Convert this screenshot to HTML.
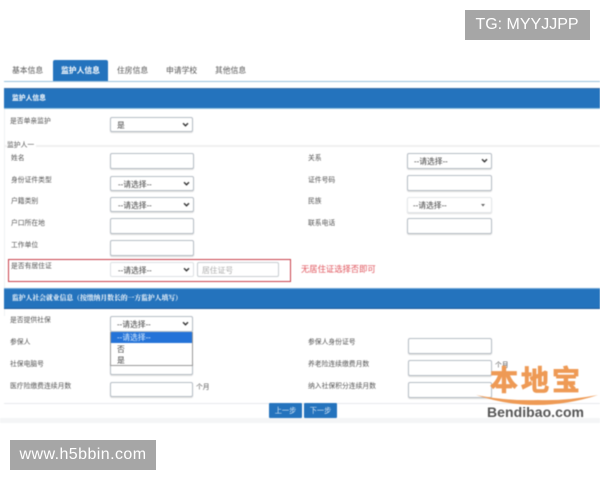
<!DOCTYPE html>
<html lang="zh">
<head>
<meta charset="utf-8">
<title>监护人信息</title>
<style>
html,body{margin:0;padding:0;background:#fff}
body{width:600px;height:480px;position:relative;overflow:hidden;font-family:"Liberation Sans","Noto Sans CJK SC",sans-serif}
#c{position:absolute;left:0;top:0;width:600px;height:480px;filter:blur(.6px)}
#c div{position:absolute;box-sizing:border-box;white-space:nowrap}
.t{font-size:6.8px;line-height:12px;color:#555}
.tab{font-size:7.8px;line-height:12px;color:#555;top:65px}
.band{background:#2473bd;color:#fff;font-weight:bold;font-size:6.8px;border-top:1px solid #3d6fa8;border-bottom:1px solid #8fc0e0}
.i{width:84px;height:16px;background:#fff;border:1px solid #b6bec5;border-radius:2px;box-shadow:0 1px 1px #ddd}
.s{width:84px;height:15px;background:#fff;border:1px solid #b6bec5;border-radius:2px;font-size:7.8px;line-height:15px;color:#444;padding-left:6px;box-shadow:0 1px 1px #ddd}
.s svg{position:absolute;right:3px;top:4px}
</style>
</head>
<body>
<div id="c">
<div class="tab" style="left:12px">基本信息</div>
<div style="left:53px;top:60px;width:55px;height:22px;background:#2473bd;border-radius:2px 2px 0 0"></div>
<div class="tab" style="left:61px;color:#fff;font-weight:bold">监护人信息</div>
<div class="tab" style="left:117px">住房信息</div>
<div class="tab" style="left:166px">申请学校</div>
<div class="tab" style="left:215px">其他信息</div>
<div style="left:4px;top:81px;width:596px;height:1px;background:#9cc3de"></div>

<div class="band" style="left:4px;top:88px;width:596px;height:21px;line-height:20px;padding-left:8px">监护人信息</div>
<div style="left:4px;top:109px;width:1px;height:207px;background:#eef1f3"></div>

<div class="t" style="left:10px;top:116px">是否单亲监护</div>
<div class="s" style="left:110px;top:117px;width:83px">是<svg width="7" height="5" viewBox="0 0 8 6"><path d="M1 1.5L4 4.5L7 1.5" fill="none" stroke="#333" stroke-width="1.6"/></svg></div>

<div style="left:4px;top:145px;width:596px;height:2px;background:#f0f0f0"></div>
<div class="t" style="left:7px;top:140px;background:#fff;padding-right:2px">监护人一</div>

<div class="t" style="left:11px;top:153px">姓名</div>
<div class="i" style="left:110px;top:153px"></div>
<div class="t" style="left:11px;top:175px">身份证件类型</div>
<div class="s" style="left:110px;top:176px;padding-left:7px">--请选择--<svg width="7" height="5" viewBox="0 0 8 6"><path d="M1 1.5L4 4.5L7 1.5" fill="none" stroke="#333" stroke-width="1.6"/></svg></div>
<div class="t" style="left:11px;top:196px">户籍类别</div>
<div class="s" style="left:110px;top:197px;padding-left:7px">--请选择--<svg width="7" height="5" viewBox="0 0 8 6"><path d="M1 1.5L4 4.5L7 1.5" fill="none" stroke="#333" stroke-width="1.6"/></svg></div>
<div class="t" style="left:11px;top:218px">户口所在地</div>
<div class="i" style="left:110px;top:218px"></div>
<div class="t" style="left:11px;top:240px">工作单位</div>
<div class="i" style="left:110px;top:240px"></div>

<div style="left:8px;top:259px;width:283px;height:23px;border:1.5px solid #c8404a"></div>
<div class="t" style="left:11px;top:261px">是否有居住证</div>
<div class="s" style="left:110px;top:262px;padding-left:7px;border-color:#dde1e4;box-shadow:none">--请选择--<svg width="7" height="5" viewBox="0 0 8 6"><path d="M1 1.5L4 4.5L7 1.5" fill="none" stroke="#333" stroke-width="1.6"/></svg></div>
<div class="i" style="left:197px;top:262px;width:82px;height:15px;border-color:#c8cdd2;box-shadow:none;font-size:7.8px;line-height:15px;color:#aaa;padding-left:4px">居住证号</div>
<div style="left:301px;top:263px;font-size:8.3px;line-height:12px;color:#e0545c">无居住证选择否即可</div>

<div class="t" style="left:308px;top:153px">关系</div>
<div class="s" style="left:407px;top:153px;width:85px;height:16px;padding-left:6px">--请选择--<svg width="7" height="5" viewBox="0 0 8 6"><path d="M1 1.5L4 4.5L7 1.5" fill="none" stroke="#333" stroke-width="1.6"/></svg></div>
<div class="t" style="left:308px;top:175px">证件号码</div>
<div class="i" style="left:407px;top:175px;width:85px"></div>
<div class="t" style="left:308px;top:196px">民族</div>
<div class="s" style="left:407px;top:197px;width:85px;height:16px;padding-left:5px;border-color:#e4e7ea">--请选择--<svg width="6" height="5" viewBox="0 0 6 5" style="right:5px;top:5px"><path d="M1 1L3 3.5L5 1Z" fill="#666"/></svg></div>
<div class="t" style="left:308px;top:218px">联系电话</div>
<div class="i" style="left:407px;top:218px;width:85px"></div>

<div class="band" style="left:4px;top:288px;width:596px;height:21px;line-height:19px;padding-left:8px;border-top-color:#6fa6d6;border-bottom-color:#1d5a9c;font-family:'Liberation Serif','Noto Serif CJK SC',serif">监护人社会就业信息（按缴纳月数长的一方监护人填写）</div>

<div class="t" style="left:10px;top:315px">是否提供社保</div>
<div class="s" style="left:110px;top:316px;width:83px;height:16px;padding-left:6px;line-height:16px">--请选择--<svg width="7" height="5" viewBox="0 0 8 6"><path d="M1 1.5L4 4.5L7 1.5" fill="none" stroke="#333" stroke-width="1.6"/></svg></div>
<div class="t" style="left:10px;top:337px">参保人</div>
<div class="t" style="left:10px;top:359px">社保电脑号</div>
<div class="i" style="left:110px;top:360px;width:83px;height:15px"></div>
<div style="left:110px;top:332px;width:83px;height:34px;background:#fff;border:1px solid #999;border-top:0;font-size:7.8px;line-height:11px;color:#444">
  <div style="left:0;top:0;width:81px;height:11px;background:#2473d8;color:#d8ecff;padding-left:6px">--请选择--</div>
  <div style="left:6px;top:12px">否</div>
  <div style="left:6px;top:23px">是</div>
</div>
<div class="t" style="left:10px;top:381px">医疗险缴费连续月数</div>
<div class="i" style="left:110px;top:382px;width:83px;height:15px"></div>
<div class="t" style="left:196px;top:382px">个月</div>

<div class="t" style="left:308px;top:337px">参保人身份证号</div>
<div class="i" style="left:408px;top:338px;height:16px"></div>
<div class="t" style="left:308px;top:359px">养老险连续缴费月数</div>
<div class="i" style="left:408px;top:360px;height:16px"></div>
<div class="t" style="left:308px;top:381px">纳入社保积分连续月数</div>
<div class="i" style="left:408px;top:382px;height:16px"></div>
<div class="t" style="left:495px;top:360px">个月</div>

<div style="left:4px;top:403px;width:596px;height:1px;background:#e8eaec"></div>
<div style="left:0;top:418px;width:600px;height:5px;background:#f4f5f6"></div>
<div style="left:269px;top:403px;width:33px;height:15px;background:#2473bd;border-radius:1px;color:#dbe9f6;font-size:7.2px;line-height:15px;text-align:center">上一步</div>
<div style="left:304px;top:403px;width:33px;height:15px;background:#2473bd;border-radius:1px;color:#dbe9f6;font-size:7.2px;line-height:15px;text-align:center">下一步</div>

<!-- watermark logo -->
<svg style="position:absolute;left:476px;top:392px" width="124" height="16" viewBox="0 0 124 16"><path d="M0 3 Q60 23 122 3 Q90 9 62 8 Q30 9 0 3Z" fill="#ee9a55"/></svg>
<div style="left:490px;top:365px;font-size:28px;line-height:32px;font-weight:bold;letter-spacing:3px;color:#ee9a55;-webkit-text-stroke:.8px #ee9a55;font-family:'Liberation Sans','Noto Sans CJK SC',sans-serif">本地宝</div>
<div style="left:487px;top:404px;font-size:14px;line-height:16px;font-weight:bold;letter-spacing:.05px;color:#555">Bendibao.com</div>
</div>

<div style="position:absolute;left:465px;top:10px;width:125px;height:30px;background:#a6a6a6;color:#fff;font-size:16px;line-height:30px;text-align:center;white-space:nowrap;filter:blur(.25px);padding-right:1px;box-sizing:border-box">TG: MYYJJPP</div>
<div style="position:absolute;left:10px;top:440px;width:146px;height:30px;background:#a6a6a6;color:#fff;font-size:16px;letter-spacing:.43px;line-height:30px;text-align:center;white-space:nowrap;filter:blur(.25px)">www.h5bbin.com</div>
</body>
</html>
